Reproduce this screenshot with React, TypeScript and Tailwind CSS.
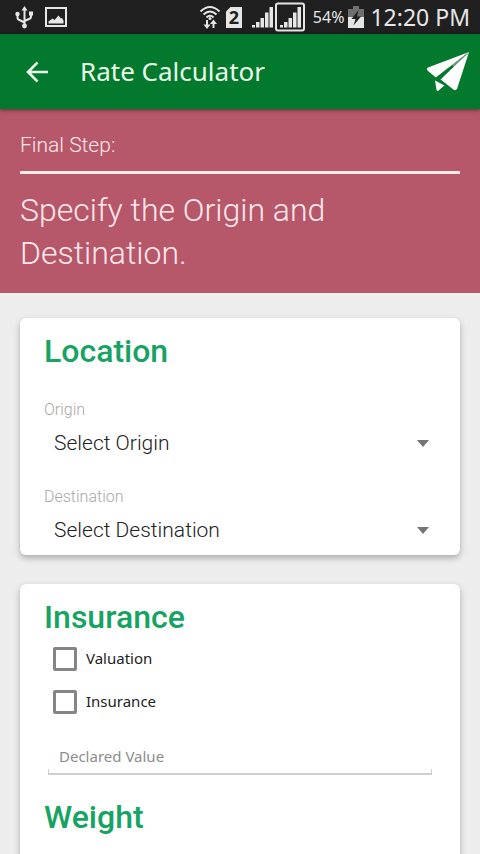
import { useState } from 'react';
import type { ReactNode } from 'react';

const StatusBar = () => {
  return (
    <div className="flex h-[34px] shrink-0 items-center justify-between bg-[#212021] pr-2.5 pl-[15px] text-[#e6e6e6]">
      <div className="flex items-center gap-2.5">
        {/* USB */}
        <svg width="19" height="24" viewBox="0 0 19 24" fill="none" stroke="currentColor" strokeWidth="2">
          <path d="M9.500 4v17M2.500 9v3.500q0 2 2 2.500l5 2.500M16 9v2.500q0 2-2 2.500l-4.500 2" />
          <path d="M9.500 1l3 4.500h-6zM14 6.500h4v4h-4z" fill="currentColor" stroke="none" />
          <circle cx="2.500" cy="9" r="2.200" fill="currentColor" stroke="none" />
          <circle cx="9.500" cy="21" r="2.400" fill="currentColor" stroke="none" />
        </svg>
        {/* Screenshot saved */}
        <svg width="24" height="22" viewBox="0 0 24 22">
          <path d="M2 2h20v18H2z" fill="none" stroke="currentColor" strokeWidth="2" />
          <path d="M4.500 17.500v-2l4-3 2 1.500 4-4.500 2.500 3 1-.5 1.500 2.500v3z" fill="currentColor" />
        </svg>
      </div>

      <div className="flex items-center">
        {/* Wi-Fi with data arrows */}
        <svg width="22" height="26" viewBox="0 0 22 26" fill="none" stroke="currentColor" strokeWidth="2">
          <path d="M1.500 7.500q9.500-9 19 0M4.500 10.500q6.500-6 13 0M7.500 13.500q3.500-3.500 7 0" />
          <circle cx="11" cy="14.500" r="1.500" fill="currentColor" stroke="none" />
          <path d="M8 16v6M14.500 24v-5" />
          <path d="M4.500 20.500h7L8 25zM11 20h7l-3.500-4.500z" fill="currentColor" stroke="none" />
        </svg>
        {/* SIM slot */}
        <svg className="ml-1" width="18" height="23" viewBox="0 0 18 23">
          <path d="M5.500 1H17v21H1V5.500z" fill="currentColor" />
          <text x="9" y="18" textAnchor="middle" fill="#212021" className="font-['Open_Sans',sans-serif] text-lg font-bold">
            2
          </text>
        </svg>
        <svg className="ml-2" width="54" height="30" viewBox="0 0 54 30" fill="currentColor">
          <path d="M1 23h3v2.500H1zM5 20h3.500v5.500H5zM9.500 16H13v9.500H9.500zM14 10.500h3.500v15H14zM18.500 5H22v20.500h-3.500z" />
          <path d="M29 23h3v2.500h-3zM33 20h3.500v5.500H33zM37.500 16H41v9.500h-3.500zM42 10.500h3.500v15H42zM46.500 5H50v20.500h-3.500z" />
          <rect x="25" y="1.500" width="28" height="27" rx="2" fill="none" stroke="currentColor" strokeWidth="2" />
        </svg>
        <span className="ml-2 text-base">54%</span>
        {/* Battery charging */}
        <svg className="ml-1" width="16" height="22" viewBox="0 0 16 22">
          <path d="M5 0h6v3h5v8H0V3h5z" fill="#707070" />
          <path d="M0 11h16v11H0z" fill="currentColor" />
          <path d="M10.500 4L3.500 13h4l-2 6.500 7.500-9H9z" fill="#212021" />
        </svg>
        <span className="ml-1.5 text-[23px]">12:20 PM</span>
      </div>
    </div>
  );
};

const TopBar = () => {
  return (
    <header className="z-10 flex h-[75px] shrink-0 items-center bg-[#03792d] pr-2.5 pl-[25px] text-[#e9fbe9] shadow-[0_1px_4px_rgba(0,0,0,0.5)]">
      <button type="button" aria-label="Back">
        <svg width="24" height="24" viewBox="0 0 24 24" fill="none" stroke="currentColor" strokeWidth="2.500">
          <path d="M23 12H3M12.500 2.500L3 12l9.500 9.500" />
        </svg>
      </button>
      <h1 className="ml-[31px] flex-1 text-[26px] font-normal">Rate Calculator</h1>
      <button type="button" aria-label="Send">
        <svg width="44" height="40" viewBox="0 0 44 40" fill="#fff">
          <path d="M43 0L2 15.500q-2 1.500 0 3.500l8.500 7zM43 0L14 27l14 11q2 .5 3-1zM9 28.500l1.500 9.500q1 1.500 2 .5l6-5z" />
          <path d="M43 0L9 26l4.500 2.500z" fill="#03792d" />
          <path d="M43 0L26 13l1.500 1.500z" fill="#7d9b86" />
        </svg>
      </button>
    </header>
  );
};

const Card = ({ children }: { children: ReactNode }) => {
  return (
    <section className="rounded-md bg-white px-6 pt-[13px] shadow-[0_3px_6px_rgba(0,0,0,0.28)]">{children}</section>
  );
};

const CardTitle = ({ children }: { children: ReactNode }) => {
  return <h2 className="font-[Roboto,sans-serif] text-[32px] leading-10 font-medium text-[#16a363]">{children}</h2>;
};

const SelectField = ({ id, label }: { id: string; label: string }) => {
  return (
    <div className="flex flex-col gap-2 font-[Roboto,sans-serif] font-light">
      <label htmlFor={id} className="text-base leading-5 text-[#a8a8a8]">
        {label}
      </label>
      <div className="relative">
        <select id={id} className="h-8 w-full appearance-none bg-transparent pl-2.5 text-[21px] text-[#222]">
          <option>Select {label}</option>
        </select>
        <svg className="pointer-events-none absolute top-3 right-[7px]" width="12" height="7" viewBox="0 0 12 7">
          <path d="M0 0h12L6 7z" fill="#757575" />
        </svg>
      </div>
    </div>
  );
};

const CheckField = ({ label }: { label: string }) => {
  const [checked, setChecked] = useState(false);

  return (
    <label className="flex h-[43px] items-center gap-[9px] pl-[9px] text-[15px] text-[#222]">
      <input
        type="checkbox"
        checked={checked}
        onChange={(e) => setChecked(e.target.checked)}
        className="size-6 appearance-none rounded-xs border-[3px] border-[#858585] checked:bg-[#16a363]"
      />
      {label}
    </label>
  );
};

const App = () => {
  return (
    <div className="flex h-screen flex-col bg-[#ededed] font-['Noto_Sans',sans-serif]">
      <StatusBar />
      <TopBar />

      <main className="min-h-0 flex-1 overflow-y-auto [scrollbar-width:none]">
        {/* Step banner */}
        <div className="bg-[#b6576a] px-5 pt-[22px] pb-[18px] font-[Roboto,sans-serif] font-light text-[#ffe9ed]">
          <p className="text-[21px] leading-7">Final Step:</p>
          <hr className="mt-3 border-t-3 border-[#ffe9ed]" />
          <p className="mt-[15px] text-[32px] leading-[43px]">Specify the Origin and Destination.</p>
        </div>

        <form className="flex flex-col gap-[29px] px-5 pt-[25px] pb-6">
          <Card>
            <CardTitle>Location</CardTitle>
            <div className="flex flex-col gap-[27px] pt-[29px] pb-2">
              <SelectField id="origin" label="Origin" />
              <SelectField id="destination" label="Destination" />
            </div>
          </Card>

          <Card>
            <CardTitle>Insurance</CardTitle>
            <CheckField label="Valuation" />
            <CheckField label="Insurance" />
            <div className="mx-1 mt-4 mb-[22px] bg-linear-to-t from-[#d0d0d0] from-[6px] to-transparent to-[6px] px-px pb-0.5">
              <input
                type="text"
                aria-label="Declared Value"
                placeholder="Declared Value"
                className="block h-[34px] w-full bg-white px-2.5 text-[15px] placeholder:text-[#8c8c8c]"
              />
            </div>
            <div className="pb-16">
              <CardTitle>Weight</CardTitle>
            </div>
          </Card>
        </form>
      </main>
    </div>
  );
};

export default App;
